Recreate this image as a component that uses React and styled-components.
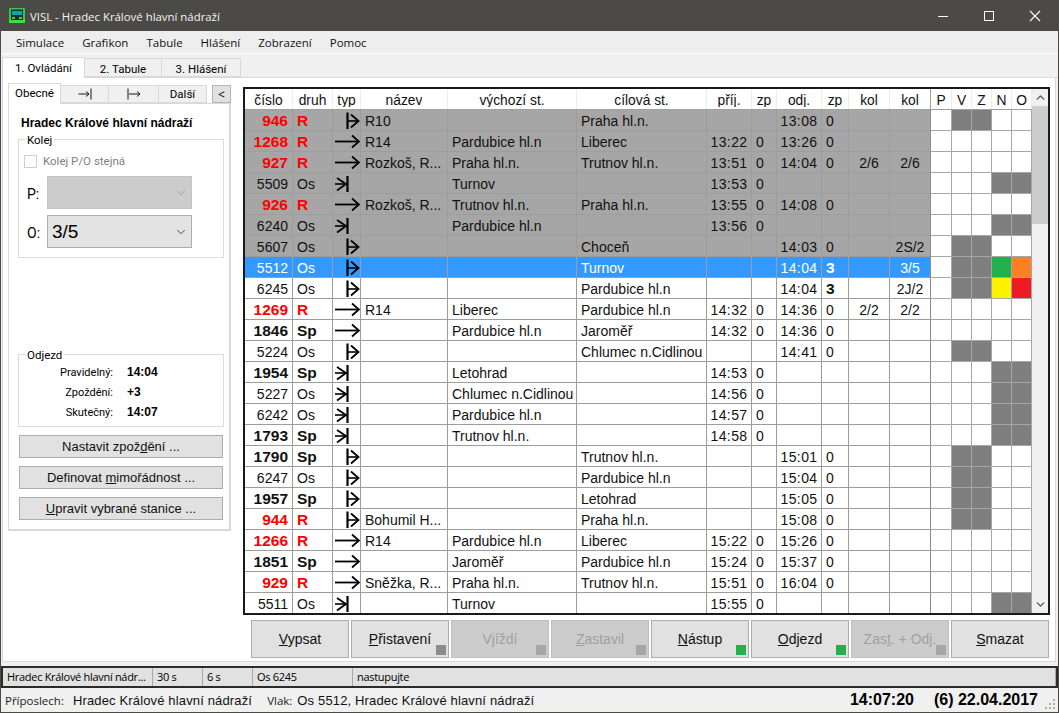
import React from 'react'
import styled, { createGlobalStyle } from 'styled-components'
import { ChevronDown, ChevronUp } from 'lucide-react'

const UI = '"Liberation Sans", Arial, sans-serif'
const SOFT = '"Open Sans", "Noto Sans", sans-serif'
const NARROW = 'Roboto, "Liberation Sans", sans-serif'

const COLS = [
  ['číslo', 48], ['druh', 40], ['typ', 28], ['název', 87], ['výchozí st.', 129], ['cílová st.', 130],
  ['příj.', 45], ['zp', 25], ['odj.', 45], ['zp', 27], ['kol', 41], ['kol', 41],
  ['P', 21], ['V', 20], ['Z', 20], ['N', 20], ['O', 20],
]
const TEMPLATE = COLS.map(c => c[1] + 'px').join(' ')

const G = '#7f7f7f'
// cislo, druh, typ, nazev, vychozi, cilova, prij, zp, odj, zp, kol, kol, flags [P V Z N O]
const ROWS = [
  ['946', 'R', 'dep', 'R10', '', 'Praha hl.n.', '', '', '13:08', '0', '', '', [0, G, G, 0, 0], 'gray'],
  ['1268', 'R', 'thru', 'R14', 'Pardubice hl.n', 'Liberec', '13:22', '0', '13:26', '0', '', '', [0, 0, 0, 0, 0], 'gray'],
  ['927', 'R', 'thru', 'Rozkoš, R...', 'Praha hl.n.', 'Trutnov hl.n.', '13:51', '0', '14:04', '0', '2/6', '2/6', [0, 0, 0, 0, 0], 'gray'],
  ['5509', 'Os', 'arr', '', 'Turnov', '', '13:53', '0', '', '', '', '', [0, 0, 0, G, G], 'gray'],
  ['926', 'R', 'thru', 'Rozkoš, R...', 'Trutnov hl.n.', 'Praha hl.n.', '13:55', '0', '14:08', '0', '', '', [0, 0, 0, 0, 0], 'gray'],
  ['6240', 'Os', 'arr', '', 'Pardubice hl.n', '', '13:56', '0', '', '', '', '', [0, 0, 0, G, G], 'gray'],
  ['5607', 'Os', 'dep', '', '', 'Choceň', '', '', '14:03', '0', '', '2S/2', [0, G, G, 0, 0], 'gray'],
  ['5512', 'Os', 'dep', '', '', 'Turnov', '', '', '14:04', '3', '', '3/5', [0, G, G, '#22b14c', '#ff7f27'], 'sel'],
  ['6245', 'Os', 'dep', '', '', 'Pardubice hl.n', '', '', '14:04', '3', '', '2J/2', [0, G, G, '#fff200', '#ed1c24']],
  ['1269', 'R', 'thru', 'R14', 'Liberec', 'Pardubice hl.n', '14:32', '0', '14:36', '0', '2/2', '2/2', [0, 0, 0, 0, 0]],
  ['1846', 'Sp', 'thru', '', 'Pardubice hl.n', 'Jaroměř', '14:32', '0', '14:36', '0', '', '', [0, 0, 0, 0, 0]],
  ['5224', 'Os', 'dep', '', '', 'Chlumec n.Cidlinou', '', '', '14:41', '0', '', '', [0, G, G, 0, 0]],
  ['1954', 'Sp', 'arr', '', 'Letohrad', '', '14:53', '0', '', '', '', '', [0, 0, 0, G, G]],
  ['5227', 'Os', 'arr', '', 'Chlumec n.Cidlinou', '', '14:56', '0', '', '', '', '', [0, 0, 0, G, G]],
  ['6242', 'Os', 'arr', '', 'Pardubice hl.n', '', '14:57', '0', '', '', '', '', [0, 0, 0, G, G]],
  ['1793', 'Sp', 'arr', '', 'Trutnov hl.n.', '', '14:58', '0', '', '', '', '', [0, 0, 0, G, G]],
  ['1790', 'Sp', 'dep', '', '', 'Trutnov hl.n.', '', '', '15:01', '0', '', '', [0, G, G, 0, 0]],
  ['6247', 'Os', 'dep', '', '', 'Pardubice hl.n', '', '', '15:04', '0', '', '', [0, G, G, 0, 0]],
  ['1957', 'Sp', 'dep', '', '', 'Letohrad', '', '', '15:05', '0', '', '', [0, G, G, 0, 0]],
  ['944', 'R', 'dep', 'Bohumil H...', '', 'Praha hl.n.', '', '', '15:08', '0', '', '', [0, G, G, 0, 0]],
  ['1266', 'R', 'thru', 'R14', 'Pardubice hl.n', 'Liberec', '15:22', '0', '15:26', '0', '', '', [0, 0, 0, 0, 0]],
  ['1851', 'Sp', 'thru', '', 'Jaroměř', 'Pardubice hl.n', '15:24', '0', '15:37', '0', '', '', [0, 0, 0, 0, 0]],
  ['929', 'R', 'thru', 'Sněžka, R...', 'Praha hl.n.', 'Trutnov hl.n.', '15:51', '0', '16:04', '0', '', '', [0, 0, 0, 0, 0]],
  ['5511', 'Os', 'arr', '', 'Turnov', '', '15:55', '0', '', '', '', '', [0, 0, 0, G, G]],
]

const ACTIONS = [
  { label: 'Vypsat', key: 'V', rest: 'ypsat' },
  { label: 'Přistavení', key: 'P', rest: 'řistavení', led: '#8c8c8c' },
  { label: 'Vjíždí', key: '', rest: 'Vjíždí', led: '#a6a6a6', off: true },
  { label: 'Zastavil', key: 'Z', rest: 'astavil', led: '#a6a6a6', off: true },
  { label: 'Nástup', key: 'N', rest: 'ástup', led: '#22b14c' },
  { label: 'Odjezd', key: 'O', rest: 'djezd', led: '#22b14c' },
  { label: 'Zast. + Odj.', pre: 'Zas', key: 't', rest: '. + Odj.', led: '#a6a6a6', off: true },
  { label: 'Smazat', key: 'S', rest: 'mazat' },
]

function TypeIcon({ kind }) {
  return (
    <svg width="28" height="20" viewBox="0 0 28 20" fill="none" stroke="#000" strokeWidth="1.6">
      {kind === 'dep' && <>
        <path d="M14.5 2.5V19" strokeWidth="2.2" />
        <path d="M15 11H25" />
        <path d="M18 4.5L25.5 11L18 17.5" strokeWidth="1.8" />
      </>}
      {kind === 'arr' && <>
        <path d="M14.5 3V19" strokeWidth="2.2" />
        <path d="M2 11H13" />
        <path d="M4 5L13 11L4 17.5" strokeWidth="1.8" />
      </>}
      {kind === 'thru' && <>
        <path d="M2 10.5H25.5" strokeWidth="1.8" />
        <path d="M19 4.5L26 10.5L19 16.5" strokeWidth="1.8" />
      </>}
    </svg>
  )
}

function EdgeArrow({ start }) {
  return (
    <svg width="14" height="12" viewBox="0 0 14 12" fill="none" stroke="#1a1a1a" strokeWidth="1">
      {start
        ? <>
            <path d="M1 0.5V11.5" stroke="#2b3a5a" strokeWidth="1.2" />
            <path d="M2 6H13" />
            <path d="M10 3.5L13 6L10 8.5" />
          </>
        : <>
            <path d="M0.5 6H11" />
            <path d="M8 3.5L11 6L8 8.5" />
            <path d="M13 0.5V11.5" stroke="#2b3a5a" strokeWidth="1.2" />
          </>}
    </svg>
  )
}

function AppLogo() {
  return (
    <svg width="16" height="15" viewBox="0 0 16 15">
      <rect x="0" y="0" width="16" height="15" rx="1" fill="#2fc84a" />
      <rect x="0" y="11" width="16" height="4" fill="#35e04a" />
      <rect x="2" y="1.5" width="12" height="10.5" fill="#12323c" />
      <rect x="3" y="3" width="10" height="4" fill="#1f9cb8" />
      <rect x="3" y="9" width="3" height="2" fill="#b89a2a" />
      <rect x="10" y="9" width="3" height="2" fill="#b89a2a" />
    </svg>
  )
}

export default function App() {
  return (
    <>
      <Global />
      <Win>
        <TitleBar>
          <AppLogo />
          <TitleText>VISL - Hradec Králové hlavní nádraží</TitleText>
          <WinButton>
            <svg width="12" height="12" viewBox="0 0 12 12" stroke="#fff" strokeWidth="1"><path d="M1 6.5H11" /></svg>
          </WinButton>
          <WinButton>
            <svg width="12" height="12" viewBox="0 0 12 12" fill="none" stroke="#fff" strokeWidth="1"><rect x="1.5" y="1.5" width="9" height="9" /></svg>
          </WinButton>
          <WinButton>
            <svg width="12" height="12" viewBox="0 0 12 12" stroke="#fff" strokeWidth="1.1"><path d="M1 1L11 11M11 1L1 11" /></svg>
          </WinButton>
        </TitleBar>

        <MenuBar>
          {['Simulace', 'Grafikon', 'Tabule', 'Hlášení', 'Zobrazení', 'Pomoc'].map(m => <MenuItem key={m}>{m}</MenuItem>)}
        </MenuBar>

        <MainTabs>
          <MainTab $active $w={83}>1. Ovládání</MainTab>
          <MainTab $w={77}>2. Tabule</MainTab>
          <MainTab $w={79}>3. Hlášení</MainTab>
        </MainTabs>

        <TabBody>
          <LeftColumn>
            <SideTabs>
              <SideTab $active $w={53}>Obecné</SideTab>
              <SideTab $w={48}><EdgeArrow /></SideTab>
              <SideTab $w={50}><EdgeArrow start /></SideTab>
              <SideTab $w={48}>Další</SideTab>
              <CollapseButton>&lt;</CollapseButton>
            </SideTabs>
            <SidePanel>
              <StationName>Hradec Králové hlavní nádraží</StationName>
              <Group $h={125} $top={1}>
                <legend>Kolej</legend>
                <CheckRow><CheckBox />Kolej P/O stejná</CheckRow>
                <PickRow $gap={8}>
                  <PickLabel>P:</PickLabel>
                  <Pick $off><ChevronDown size={14} strokeWidth={1.5} color="#9a9a9a" /></Pick>
                </PickRow>
                <PickRow $gap={6}>
                  <PickLabel>O:</PickLabel>
                  <Pick><span>3/5</span><ChevronDown size={14} strokeWidth={1.5} color="#333" /></Pick>
                </PickRow>
              </Group>
              <Group $h={79} $push>
                <legend>Odjezd</legend>
                <Facts>
                  <dt>Pravidelný:</dt><dd>14:04</dd>
                  <dt>Zpoždění:</dt><dd>+3</dd>
                  <dt>Skutečný:</dt><dd>14:07</dd>
                </Facts>
              </Group>
              <SideButton><span>Nastavit zpož<u>d</u>ění ...</span></SideButton>
              <SideButton><span>Definovat <u>m</u>imořádnost ...</span></SideButton>
              <SideButton><span><u>U</u>pravit vybrané stanice ...</span></SideButton>
            </SidePanel>
          </LeftColumn>

          <RightColumn>
            <TableFrame>
              <GridArea>
                <HeadRow>
                  {COLS.map((c, i) => <HeadCell key={i} $split={i === 11}><HeadLabel $flag={i > 11}>{c[0]}</HeadLabel></HeadCell>)}
                </HeadRow>
                {ROWS.map(r => {
                  const fast = r[1] !== 'Os'
                  const red = r[1] === 'R'
                  return (
                    <Row key={r[0]} $tone={r[13]}>
                      <Cell $num $bold={fast} $red={red}>{r[0]}</Cell>
                      <Cell $bold={fast} $red={red}>{r[1]}</Cell>
                      <IconCell><TypeIcon kind={r[2]} /></IconCell>
                      <Cell>{r[3]}</Cell>
                      <Cell>{r[4]}</Cell>
                      <Cell>{r[5]}</Cell>
                      <Cell $center $time>{r[6]}</Cell>
                      <Cell>{r[7]}</Cell>
                      <Cell $center $time>{r[8]}</Cell>
                      <Cell $bold={r[9] === '3'}>{r[9]}</Cell>
                      <Cell $center>{r[10]}</Cell>
                      <Cell $center $split>{r[11]}</Cell>
                      {r[12].map((f, i) => <Flag key={i} $fill={f} />)}
                    </Row>
                  )
                })}
              </GridArea>
              <ScrollBar>
                <ScrollEnd><ChevronUp size={13} strokeWidth={2.5} color="#555" /></ScrollEnd>
                <ScrollThumb />
                <ScrollEnd $bottom><ChevronDown size={13} strokeWidth={2.5} color="#555" /></ScrollEnd>
              </ScrollBar>
            </TableFrame>
            <ActionBar>
              {ACTIONS.map(a => (
                <ActionButton key={a.label} $off={a.off}>
                  <span>{a.pre}{a.key && <u>{a.key}</u>}{a.rest}</span>
                  {a.led && <Led $color={a.led} />}
                </ActionButton>
              ))}
            </ActionBar>
          </RightColumn>
        </TabBody>

        <AudioStrip>
          <AudioCell $w={150}>Hradec Králové hlavní nádr...</AudioCell>
          <AudioCell $w={50}>30 s</AudioCell>
          <AudioCell $w={50}>6 s</AudioCell>
          <AudioCell $w={100}>Os 6245</AudioCell>
          <AudioCell $grow>nastupujte</AudioCell>
        </AudioStrip>

        <StatusBar>
          <StatusLabel>Příposlech:</StatusLabel>
          <StatusValue $gap={9}>Hradec Králové hlavní nádraží</StatusValue>
          <StatusLabel $gap>Vlak:</StatusLabel>
          <StatusValue $gap={5}>Os 5512, Hradec Králové hlavní nádraží</StatusValue>
          <Clock>14:07:20</Clock>
          <Clock $wide>(6) 22.04.2017</Clock>
          <Grip viewBox="0 0 12 12" width="12" height="12" fill="#b0b0b0">
            <rect x="9" y="9" width="2" height="2" /><rect x="5" y="9" width="2" height="2" /><rect x="1" y="9" width="2" height="2" />
            <rect x="9" y="5" width="2" height="2" /><rect x="5" y="5" width="2" height="2" /><rect x="9" y="1" width="2" height="2" />
          </Grip>
        </StatusBar>
      </Win>
    </>
  )
}

const Global = createGlobalStyle`
  html, body { margin: 0; padding: 0; background: #f0f0f0; overflow: hidden; }
  * { box-sizing: border-box; }
`

const Win = styled.div`
  width: 1059px;
  height: 713px;
  display: flex;
  flex-direction: column;
  border: 1px solid #4b4a47;
  border-top: 0;
  background: #f0f0f0;
  font-family: ${UI};
  color: #000;
`

const TitleBar = styled.div`
  height: 31px;
  flex: none;
  display: flex;
  align-items: center;
  padding: 0 1px 0 9px;
  margin: 0 -1px;
  background: #4b4a47;
  color: #fff;
`

const TitleText = styled.div`
  flex: 1;
  margin-left: 5px;
  padding-top: 2px;
  font: 11.4px ${SOFT};
  color: #f2f2f2;
`

const WinButton = styled.div`
  width: 46px;
  height: 31px;
  display: flex;
  align-items: center;
  justify-content: center;
`

const MenuBar = styled.div`
  height: 23px;
  flex: none;
  display: flex;
  align-items: center;
  padding-left: 7px;
  background: #eeeeee;
  border-bottom: 1px solid #fafafa;
`

const MenuItem = styled.div`
  padding: 1px 8px 0;
  margin-right: 2px;
  font: 11.5px ${SOFT};
  color: #111;
`

const MainTabs = styled.div`
  height: 24px;
  flex: none;
  display: flex;
  align-items: flex-end;
  padding-left: 1px;
  border-bottom: 1px solid #d9d9d9;
`

const MainTab = styled.div`
  width: ${p => p.$w}px;
  height: ${p => (p.$active ? 21 : 19)}px;
  margin-bottom: ${p => (p.$active ? -1 : 0)}px;
  padding-top: ${p => (p.$active ? 0 : 3)}px;
  display: flex;
  align-items: center;
  justify-content: center;
  font: 11.5px ${NARROW};
  background: ${p => (p.$active ? '#fff' : '#f0f0f0')};
  border: 1px solid #d9d9d9;
  border-left-width: ${p => (p.$active ? 1 : 0)}px;
  border-bottom: ${p => (p.$active ? 0 : '1px solid #d9d9d9')};
  position: relative;
`

const TabBody = styled.div`
  height: 584px;
  flex: none;
  display: flex;
  margin: 0 2px 0 1px;
  padding: 5px 6px 0 5px;
  background: #fff;
  border: 1px solid #d9d9d9;
  border-top: 0;
`

const LeftColumn = styled.div`
  width: 223px;
  flex: none;
  display: flex;
  flex-direction: column;
`

const SideTabs = styled.div`
  height: 20px;
  flex: none;
  display: flex;
  align-items: flex-end;
`

const SideTab = styled.div`
  width: ${p => p.$w}px;
  height: ${p => (p.$active ? 21 : 18)}px;
  margin-bottom: ${p => (p.$active ? -1 : 0)}px;
  padding-bottom: ${p => (p.$active ? 3 : 1)}px;
  display: flex;
  align-items: center;
  justify-content: center;
  font: 11.5px ${NARROW};
  background: ${p => (p.$active ? '#fff' : '#f0f0f0')};
  border: 1px solid #d9d9d9;
  border-left-width: ${p => (p.$active ? 1 : 0)}px;
  border-bottom: ${p => (p.$active ? 0 : '1px solid #d9d9d9')};
  position: relative;
`

const CollapseButton = styled.div`
  width: 19px;
  height: 18px;
  margin: 0 0 0 5px;
  display: flex;
  align-items: center;
  justify-content: center;
  font: 12px ${SOFT};
  background: #e1e1e1;
  border: 1px solid #b5b5b5;
`

const SidePanel = styled.div`
  height: 428px;
  flex: none;
  display: flex;
  flex-direction: column;
  padding: 12px 5px 9px 9px;
  border: 1px solid #d9d9d9;
  border-width: 1px 2px 2px 1px;
`

const StationName = styled.div`
  font: bold 12px ${UI};
  margin-left: 3px;
  height: 16px;
  line-height: 14px;
`

const Group = styled.fieldset`
  height: ${p => p.$h}px;
  flex: none;
  margin: ${p => (p.$push ? 'auto 0 8px' : `${p.$top || 0}px 0 0`)};
  padding: 0 5px;
  border: 1px solid #dcdcdc;
  min-width: 0;
  legend {
    padding: 1px 2px 0;
    margin-left: 1px;
    font: 11.5px/12px ${NARROW};
  }
`

const CheckRow = styled.div`
  display: flex;
  align-items: center;
  gap: 6px;
  height: 14px;
  margin-top: 8px;
  font: 11.5px ${NARROW};
  color: #808080;
`

const CheckBox = styled.span`
  width: 13px;
  height: 13px;
  border: 1px solid #cfcfcf;
  background: #fff;
`

const PickRow = styled.div`
  display: flex;
  align-items: center;
  margin-top: ${p => p.$gap}px;
`

const PickLabel = styled.div`
  width: 23px;
  padding: 3px 0 0 3px;
  font: 14px ${NARROW};
`

const Pick = styled.div`
  width: 145px;
  height: 33px;
  display: flex;
  align-items: center;
  justify-content: ${p => (p.$off ? 'flex-end' : 'space-between')};
  padding: 0 3px 0 4px;
  background: ${p => (p.$off ? '#cccccc' : '#e3e3e3')};
  border: 1px solid ${p => (p.$off ? '#c4c4c4' : '#adadad')};
  font: 19px ${UI};
`

const Facts = styled.dl`
  margin: 1px 0 0;
  display: grid;
  grid-template-columns: 89px 1fr;
  grid-auto-rows: 20px;
  column-gap: 14px;
  align-items: center;
  dt {
    text-align: right;
    font: 11px ${NARROW};
  }
  dd {
    margin: 0;
    font: bold 12px ${UI};
  }
`

const SideButton = styled.div`
  height: 23px;
  flex: none;
  margin: 0 1px 8px;
  display: flex;
  align-items: center;
  justify-content: center;
  background: #e1e1e1;
  border: 1px solid #adadad;
  font: 13px ${UI};
  color: #111;
  &:last-child { margin-bottom: 0; }
`

const RightColumn = styled.div`
  flex: 1;
  min-width: 0;
  margin: 4px 0 0 12px;
  display: flex;
  flex-direction: column;
`

const TableFrame = styled.div`
  width: 807px;
  height: 528px;
  flex: none;
  display: flex;
  border: 2px solid #1a1a1a;
  overflow: hidden;
  background: #fff;
`

const GridArea = styled.div`
  width: 787px;
  flex: none;
`

const HeadRow = styled.div`
  display: grid;
  grid-template-columns: ${TEMPLATE};
  height: 21px;
  border-bottom: 1px solid #a0a0a0;
`

const HeadCell = styled.div`
  display: flex;
  justify-content: center;
  color: #111;
  border-right: 1px solid ${p => (p.$split ? '#a0a0a0' : '#ececec')};
`

// the header text is cut off just under the baseline, as in the old grid control
const HeadLabel = styled.div`
  height: ${p => (p.$flag ? 20 : 18)}px;
  padding-top: 4px;
  font-size: 13.8px;
  line-height: 15px;
  overflow: hidden;
`

const toneBack = { gray: '#a6a6a6', sel: '#3399ff' }

const Row = styled.div`
  display: grid;
  grid-template-columns: ${TEMPLATE};
  height: 21px;
  background: ${p => toneBack[p.$tone] || '#fff'};
  color: ${p => (p.$tone === 'sel' ? '#fff' : '#111')};
`

const Cell = styled.div`
  display: flex;
  align-items: center;
  justify-content: ${p => (p.$num ? 'flex-end' : p.$center ? 'center' : 'flex-start')};
  padding: ${p => (p.$center ? '2px 0 0' : p.$num ? '2px 4px 0 0' : '2px 0 0 4px')};
  font-size: ${p => (p.$bold ? 15.5 : 14)}px;
  letter-spacing: ${p => (p.$time ? '0.4px' : 0)};
  white-space: nowrap;
  overflow: hidden;
  font-weight: ${p => (p.$bold ? 'bold' : 'normal')};
  color: ${p => (p.$red ? '#ff0000' : 'inherit')};
  border-right: 1px solid ${p => (p.$split ? '#8c8c8c' : '#9d9d9d')};
  border-bottom: 1px solid #9d9d9d;
`

const IconCell = styled.div`
  border-right: 1px solid #9d9d9d;
  border-bottom: 1px solid #9d9d9d;
  overflow: hidden;
  svg { display: block; }
`

const Flag = styled.div`
  background: ${p => p.$fill || '#fff'};
  border-right: 1px solid #a6a6a6;
  border-bottom: 1px solid #a6a6a6;
`

const ScrollBar = styled.div`
  flex: 1;
  display: flex;
  flex-direction: column;
  background: #f0f0f0;
`

const ScrollEnd = styled.div`
  height: 17px;
  flex: none;
  display: flex;
  align-items: center;
  justify-content: center;
  margin-top: ${p => (p.$bottom ? 'auto' : 0)};
`

const ScrollThumb = styled.div`
  height: 118px;
  flex: none;
  background: #cdcdcd;
`

const ActionBar = styled.div`
  display: flex;
  gap: 2px;
  margin: 5px 0 0 8px;
`

const ActionButton = styled.div`
  width: 98px;
  height: 38px;
  position: relative;
  display: flex;
  align-items: center;
  justify-content: center;
  font-size: 14px;
  background: ${p => (p.$off ? '#cccccc' : '#e1e1e1')};
  color: ${p => (p.$off ? '#a0a0a0' : '#111')};
  border: 1px solid ${p => (p.$off ? '#bfbfbf' : '#adadad')};
`

const Led = styled.span`
  position: absolute;
  right: 2px;
  bottom: 2px;
  width: 10px;
  height: 10px;
  background: ${p => p.$color};
`

const AudioStrip = styled.div`
  height: 22px;
  flex: none;
  margin-top: 4px;
  display: flex;
  background: #e1e1e1;
  border: 2px solid #2b2b2b;
`

const AudioCell = styled.div`
  width: ${p => (p.$w ? p.$w + 'px' : 'auto')};
  flex: ${p => (p.$grow ? 1 : 'none')};
  display: flex;
  align-items: center;
  padding: 0 0 1px 4px;
  font: 11px ${SOFT};
  letter-spacing: -0.3px;
  border-right: 1px solid #a8a8a8;
`

const StatusBar = styled.div`
  flex: 1;
  display: flex;
  align-items: center;
  padding: 0 2px 0 4px;
  background: #f0f0f0;
`

const StatusLabel = styled.span`
  font: 11.5px ${SOFT};
  color: #222;
  margin-left: ${p => (p.$gap ? '15px' : 0)};
`

const StatusValue = styled.span`
  font-size: 13px;
  margin-left: ${p => p.$gap}px;
  letter-spacing: 0.15px;
  color: #111;
`

const Clock = styled.span`
  font: bold 16px ${UI};
  margin-left: ${p => (p.$wide ? '20px' : 'auto')};
`

const Grip = styled.svg`
  margin: 8px 0 0 6px;
`
